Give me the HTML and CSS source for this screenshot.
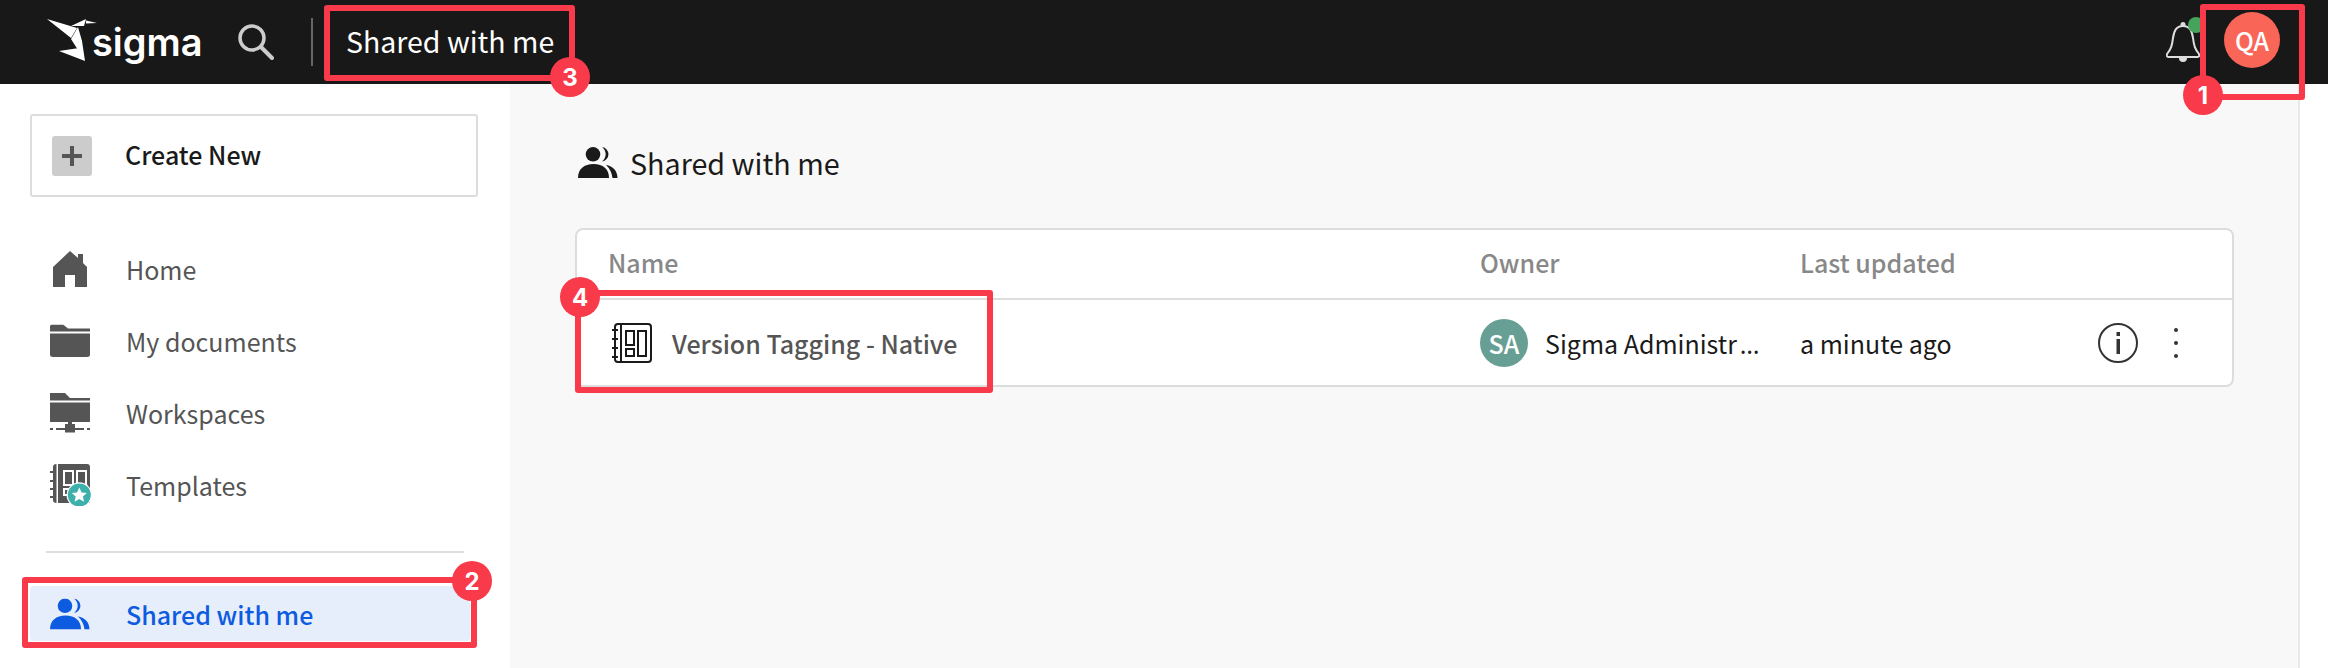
FILE: index.html
```html
<!DOCTYPE html>
<html lang="en">

<head>
    <meta charset="UTF-8">
    <title>Shared with me</title>
    <link rel="stylesheet" href="styles.css">
</head>

<body>
    <div class="app">
        <header class="topbar">
            <div class="logo">
                <svg class="logo-mark" viewBox="0 0 52 44" width="52" height="44">
                    <path fill="#fff" d="M1 1 L31 10 L25 20 Z M32 9 L36 23 L39 43 L25 21 Z M13 33 L33 30 L39 43 Z M25 8 L40 1 L38 8 Z M40 2.500 L51 5 L40 5.500 Z"/>
                </svg>
                <span class="logo-text">sigma</span>
            </div>
            <svg class="search-icon" viewBox="0 0 36 36" width="36" height="36">
                <circle cx="14" cy="14" r="12" fill="none" stroke="#ccc" stroke-width="3.500"/>
                <path d="M23 23 L34 34" stroke="#ccc" stroke-width="4" stroke-linecap="round"/>
            </svg>
            <div class="topbar-divider"></div>
            <div class="topbar-title">Shared with me</div>
            <div class="topbar-right">
                <div class="bell">
                    <svg viewBox="0 0 34 42" width="34" height="42">
                        <path fill="none" stroke="#ddd" stroke-width="2" stroke-linejoin="round" d="M17 5 C10 5 8 10 7 17 C6 25 5 28 1 33 Q0 36 3 36 L31 36 Q34 36 33 33 C29 28 28 25 27 17 C26 10 24 5 17 5 Z"/>
                        <circle cx="17" cy="3.500" r="2.500" fill="#ddd"/>
                        <path fill="#ddd" d="M13 37 h8 a4 4 0 0 1 -8 0 Z"/>
                    </svg>
                    <span class="bell-dot"></span>
                </div>
                <div class="avatar avatar-user">QA</div>
            </div>
        </header>

        <div class="content">
            <aside class="sidebar">
                <button class="create-button">
                    <span class="create-plus">
                        <svg viewBox="0 0 20 20" width="20" height="20"><path d="M8 0 h4 v8 h8 v4 h-8 v8 h-4 v-8 h-8 v-4 h8 Z" fill="#555"/></svg>
                    </span>
                    <span class="create-label">Create New</span>
                </button>

                <nav class="nav-list">
                    <div class="nav-item">
                        <svg class="nav-icon" viewBox="0 0 40 36" width="40" height="36">
                            <path fill="#555" d="M3 36 V16 L20 0 L28 7 V3 L33 3 V12 L37 16 V36 H25 V24 H15 V36 Z"/>
                        </svg>
                        Home
                    </div>
                    <div class="nav-item">
                        <svg class="nav-icon" viewBox="0 0 40 33" width="40" height="33">
                            <path fill="#555" d="M0 2 Q0 0 2 0 H13 L18 4 H40 V7 H0 Z M0 9 H40 V30 Q40 32.500 37 32.500 H3 Q0 32.500 0 30 Z"/>
                        </svg>
                        My documents
                    </div>
                    <div class="nav-item">
                        <svg class="nav-icon" viewBox="0 0 40 40" width="40" height="40">
                            <path fill="#555" d="M0 0 H15 L20 5 H40 V7.500 H0 Z M0 9.500 H40 V29 H0 Z M18 29 H22 V31 H18 Z M15 31 H25 V39.500 H15 Z M0 35 H3 V37 H0 Z M6 35 H15 V37 H6 Z M25 35 H34 V37 H25 Z M37 35 H40 V37 H37 Z"/>
                        </svg>
                        Workspaces
                    </div>
                    <div class="nav-item">
                        <svg class="nav-icon" viewBox="0 0 42 42" width="42" height="42">
                            <path fill="#555" d="M3 3 Q3 0 6.500 0 V39 Q3 39 3 36 Z M8 0 H37 Q40 0 40 3 V39 H8 Z"/>
                            <path stroke="#555" stroke-width="2" d="M0 8 H3 M0 17 H3 M0 25 H3 M0 33 H3"/>
                            <g fill="none" stroke="#fff" stroke-width="2">
                                <rect x="14" y="7" width="9" height="14"/>
                                <rect x="27" y="7" width="9" height="14"/>
                                <rect x="14" y="25" width="6" height="6"/>
                            </g>
                            <circle cx="29.300" cy="31" r="12.700" fill="#fff"/>
                            <circle cx="29.300" cy="31" r="11.500" fill="#3eb0ac"/>
                            <path fill="#fff" d="M29.300 23.500 L31.600 28.400 L36.800 29 L32.900 32.500 L34 37.800 L29.300 35.100 L24.600 37.800 L25.700 32.500 L21.800 29 L27 28.400 Z"/>
                        </svg>
                        Templates
                    </div>
                </nav>

                <div class="sidebar-divider"></div>

                <div class="nav-item nav-item-active">
                    <svg class="nav-icon" viewBox="0 0 40 31" width="40" height="31">
                        <circle cx="15" cy="7.300" r="7.300" fill="#0d5be0"/>
                        <path fill="#0d5be0" d="M24 0 A7.300 7.300 0 0 1 24 14.500 A9 9 0 0 0 24 0 Z"/>
                        <path fill="#0d5be0" d="M0 31 C0 22 6 17 15.500 17 C25 17 31 22 31 31 Z"/>
                        <path fill="#0d5be0" d="M28 18 C35 19 39.500 24 39.500 31 H34.500 Q33.500 23 28 18 Z"/>
                    </svg>
                    Shared with me
                </div>
            </aside>

            <main class="main">
                <h2 class="page-title">
                    <svg viewBox="0 0 40 31" width="40" height="31">
                        <circle cx="15" cy="7.300" r="7.300" fill="#1a1a1a"/>
                        <path fill="#1a1a1a" d="M24 0 A7.300 7.300 0 0 1 24 14.500 A9 9 0 0 0 24 0 Z"/>
                        <path fill="#1a1a1a" d="M0 31 C0 22 6 17 15.500 17 C25 17 31 22 31 31 Z"/>
                        <path fill="#1a1a1a" d="M28 18 C35 19 39.500 24 39.500 31 H34.500 Q33.500 23 28 18 Z"/>
                    </svg>
                    Shared with me
                </h2>

                <div class="doc-table">
                    <div class="doc-row doc-head">
                        <div>Name</div>
                        <div>Owner</div>
                        <div>Last updated</div>
                    </div>
                    <div class="doc-row doc-body">
                        <div class="doc-name">
                            <svg viewBox="0 0 40 40" width="40" height="40">
                                <g fill="none" stroke="#1a1a1a" stroke-width="2">
                                    <rect x="3" y="1" width="36" height="38" rx="3"/>
                                    <path d="M9 1 V39"/>
                                    <path d="M0 7 H6 M0 16 H6 M0 25 H6 M0 34 H6"/>
                                    <rect x="14" y="8" width="8" height="14"/>
                                    <rect x="14" y="26" width="8" height="7"/>
                                    <rect x="26" y="8" width="8" height="25"/>
                                </g>
                            </svg>
                            <span>Version Tagging - Native</span>
                        </div>
                        <div class="doc-owner">
                            <div class="avatar avatar-owner">SA</div>
                            <span class="owner-name">Sigma Administr<span class="ellipsis">…</span></span>
                        </div>
                        <div class="doc-updated">a minute ago</div>
                        <div class="doc-actions">
                            <svg viewBox="0 0 40 40" width="40" height="40">
                                <circle cx="20" cy="20" r="19" fill="none" stroke="#333" stroke-width="2"/>
                                <rect x="18.500" y="16" width="3.500" height="15" fill="#333"/>
                                <rect x="18.500" y="9" width="3.500" height="4" fill="#333"/>
                            </svg>
                            <div class="kebab"><span></span><span></span><span></span></div>
                        </div>
                    </div>
                </div>
            </main>

            <div class="scroll-gutter"></div>
        </div>

        <!-- red callouts drawn over the screenshot -->
        <div class="callout callout-user"></div>
        <div class="callout callout-nav"></div>
        <div class="callout callout-title"></div>
        <div class="callout callout-doc"></div>
        <div class="callout-badge badge-user">1</div>
        <div class="callout-badge badge-nav">2</div>
        <div class="callout-badge badge-title">3</div>
        <div class="callout-badge badge-doc">4</div>
    </div>
</body>

</html>
```

FILE: styles.css
```css
* {
    margin: 0;
    padding: 0;
    box-sizing: border-box;
}

body {
    font-family: "Noto Sans CJK JP", "Noto Sans", sans-serif;
    background: #f8f8f8;
    color: #1a1a1a;
}

.app {
    position: relative;
    width: 2328px;
    height: 668px;
    overflow: hidden;
    display: flex;
    flex-direction: column;
}

.topbar {
    height: 84px;
    background: #181818;
    display: flex;
    align-items: center;
    padding-left: 46px;
    flex-shrink: 0;
}

.logo {
    display: flex;
    align-items: center;
    width: 192px;
}

.logo-mark {
    margin-top: -4px;
}

.logo-text {
    font-family: "Inter", sans-serif;
    font-size: 38px;
    font-weight: 600;
    color: #fff;
    margin-left: -6px;
}

.topbar-divider {
    width: 2px;
    height: 48px;
    background: #666;
    margin-left: 37px;
}

.topbar-title {
    color: #fff;
    font-size: 28.500px;
    font-weight: 400;
    margin-left: 33px;
    margin-top: -3px;
}

.topbar-right {
    margin-left: auto;
    display: flex;
    align-items: center;
    padding-right: 48px;
}

.bell {
    position: relative;
    display: flex;
    margin-right: 24px;
}

.bell-dot {
    position: absolute;
    top: -4px;
    right: -4px;
    width: 16px;
    height: 16px;
    border-radius: 50%;
    background: #46a35c;
}

.avatar {
    border-radius: 50%;
    color: #fff;
    display: flex;
    align-items: center;
    justify-content: center;
    flex-shrink: 0;
}

.avatar-user {
    width: 56px;
    height: 56px;
    background: #f96557;
    font-size: 25px;
    font-weight: 500;
    margin-top: -4px;
}

.content {
    flex: 1;
    display: flex;
    min-height: 0;
}

.sidebar {
    width: 510px;
    flex-shrink: 0;
    background: #fff;
    padding: 30px 30px 0;
}

.create-button {
    width: 448px;
    height: 83px;
    background: #fff;
    border: 2px solid #ddd;
    border-radius: 3px;
    display: flex;
    align-items: center;
    gap: 33px;
    padding-left: 20px;
    font-family: inherit;
    font-size: 25px;
    font-weight: 500;
    color: #1a1a1a;
}

.create-label {
    margin-top: -3px;
}

.create-plus {
    width: 40px;
    height: 40px;
    background: #ccc;
    border-radius: 3px;
    display: flex;
    align-items: center;
    justify-content: center;
}

.nav-list {
    margin-top: 36px;
}

.nav-item {
    height: 72px;
    display: flex;
    align-items: center;
    font-size: 25px;
    font-weight: 400;
    color: #555;
    position: relative;
    padding-left: 96px;
}

.nav-icon {
    position: absolute;
    left: 20px;
    top: 50%;
    transform: translateY(-50%);
}

.sidebar-divider {
    height: 2px;
    background: #ddd;
    margin: 30px 16px 33px 16px;
}

.nav-item-active {
    width: 440px;
    height: 55px;
    background: #e7eefb;
    border-radius: 4px;
    color: #0d5be0;
    font-weight: 500;
}

.main {
    flex: 1;
    padding: 0 64px 0 65px;
    min-width: 0;
}

.page-title {
    display: flex;
    align-items: center;
    gap: 12px;
    font-size: 28.700px;
    font-weight: 400;
    color: #1a1a1a;
    height: 44px;
    margin-top: 56px;
    padding-left: 3px;
}

.doc-table {
    margin-top: 44px;
    background: #fff;
    border: 2px solid #ddd;
    border-radius: 8px;
}

.doc-row {
    display: grid;
    grid-template-columns: 872px 320px 1fr;
    padding-left: 31px;
    align-items: center;
}

.doc-head {
    height: 70px;
    border-bottom: 2px solid #ddd;
    padding-bottom: 4px;
    font-size: 25px;
    font-weight: 500;
    color: #888;
}

.doc-body {
    height: 85px;
    grid-template-columns: 872px 320px 1fr auto;
    padding-right: 54px;
    font-size: 25px;
    font-weight: 400;
}

.doc-name {
    display: flex;
    align-items: center;
    gap: 20px;
    padding-left: 4px;
    font-size: 25px;
    font-weight: 500;
    color: #555;
}

.doc-owner {
    display: flex;
    align-items: center;
    gap: 17px;
    min-width: 0;
}

.avatar-owner {
    width: 48px;
    height: 48px;
    background: #689f95;
    font-size: 25px;
    font-weight: 500;
}

.owner-name {
    white-space: nowrap;
}

.ellipsis {
    font-family: "Noto Sans", sans-serif;
    margin-left: 3px;
}

.doc-actions {
    display: flex;
    align-items: center;
    gap: 36px;
}

.kebab {
    display: flex;
    flex-direction: column;
    gap: 9px;
}

.kebab span {
    width: 4px;
    height: 4px;
    border-radius: 50%;
    background: #333;
}

.scroll-gutter {
    width: 30px;
    flex-shrink: 0;
    background: #fff;
    border-left: 2px solid #e8e8e8;
}

.callout {
    position: absolute;
    border: 6px solid #f93a4b;
    border-radius: 3px;
}

.callout-user {
    left: 2200px;
    top: 4px;
    width: 105px;
    height: 96px;
}

.callout-nav {
    left: 22px;
    top: 577px;
    width: 455px;
    height: 71px;
}

.callout-title {
    left: 324px;
    top: 5px;
    width: 251px;
    height: 76px;
}

.callout-doc {
    left: 575px;
    top: 290px;
    width: 418px;
    height: 103px;
}

.callout-badge {
    position: absolute;
    width: 40px;
    height: 40px;
    border-radius: 50%;
    background: #f93a4b;
    color: #fff;
    font-family: "Inter", sans-serif;
    font-size: 24px;
    font-weight: 700;
    display: flex;
    align-items: center;
    justify-content: center;
}

.badge-user {
    left: 2183px;
    top: 75px;
}

.badge-nav {
    left: 452px;
    top: 561px;
}

.badge-title {
    left: 550px;
    top: 57px;
}

.badge-doc {
    left: 560px;
    top: 277px;
}
```
